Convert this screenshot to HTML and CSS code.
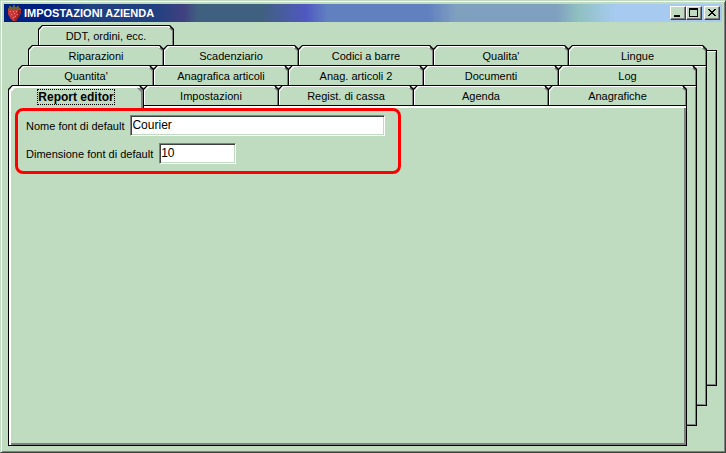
FILE: index.html
```html
<!DOCTYPE html>
<html lang="it">
  <head>
    <meta charset="utf-8" />
    <title>Impostazioni azienda</title>
    <meta name="viewport" content="width=device-width, initial-scale=1.0" />
    <link rel="stylesheet" href="styles.css">
  </head>
  <body>
    <div class="window">
      <header class="titlebar">
        <svg class="logo" width="16" height="16" viewBox="0 0 16 16">
          <path d="M2 4 L4 2 L12 2 L15 4 L15 7 L14 10 L12 13 L10 16 L7 16 L4 13 L2 9 Z" fill="#c83838" />
          <path d="M12 5 L15 5 L14 10 L12 13 L10 16 L8 15 L11 11 Z" fill="#982020" />
          <path d="M4 6h1v1h-1zM7 6h1v1h-1zM10 6h1v1h-1zM5 9h1v1h-1zM8 8h1v1h-1zM11 9h1v1h-1zM7 12h1v1h-1zM9 11h1v1h-1z" fill="#f09070" />
          <path d="M3 1h2v1h2v-2h2v2h2v-1h2v2h1v1h-3v1h-2v-1h-2v1h-2v-1h-3v-1h1z" fill="#686030" />
        </svg>
        <h1>IMPOSTAZIONI AZIENDA</h1>
        <div class="controls">
          <button aria-label="Riduci a icona">
            <svg width="12" height="10" viewBox="0 0 12 10"><path d="M2 7h6v2h-6z" /></svg>
          </button>
          <button aria-label="Ingrandisci">
            <svg width="12" height="10" viewBox="0 0 12 10"><path fill-rule="evenodd" d="M1 0h9v9h-9zM2 2v6h7v-6z" /></svg>
          </button>
          <button class="close" aria-label="Chiudi">
            <svg width="12" height="10" viewBox="0 0 12 10"><path d="M2 1h2v1h1v1h2v-1h1v-1h2v1h-1v1h-1v1h-1v1h1v1h1v1h1v1h-2v-1h-1v-1h-2v1h-1v1h-2v-1h1v-1h1v-1h1v-1h-1v-1h-1v-1h-1z" /></svg>
          </button>
        </div>
      </header>

      <main class="sheets">
        <section class="sheet sheet-4">
          <div class="tabs">
            <button class="tab">DDT, ordini, ecc.</button>
          </div>
          <div class="page"></div>
        </section>
        <section class="sheet sheet-3">
          <div class="tabs">
            <button class="tab">Riparazioni</button>
            <button class="tab">Scadenziario</button>
            <button class="tab">Codici a barre</button>
            <button class="tab">Qualita'</button>
            <button class="tab">Lingue</button>
          </div>
          <div class="page"></div>
        </section>
        <section class="sheet sheet-2">
          <div class="tabs">
            <button class="tab">Quantita'</button>
            <button class="tab">Anagrafica articoli</button>
            <button class="tab">Anag. articoli 2</button>
            <button class="tab">Documenti</button>
            <button class="tab">Log</button>
          </div>
          <div class="page"></div>
        </section>
        <section class="sheet sheet-1">
          <div class="tabs">
            <button class="tab active"><span>Report editor</span></button>
            <button class="tab">Impostazioni</button>
            <button class="tab">Regist. di cassa</button>
            <button class="tab">Agenda</button>
            <button class="tab">Anagrafiche</button>
          </div>
          <div class="page">
            <form class="fonts">
              <div class="field">
                <label for="font-name">Nome font di default</label>
                <input id="font-name" class="name" type="text" value="Courier" />
              </div>
              <div class="field">
                <label for="font-size">Dimensione font di default</label>
                <input id="font-size" class="size" type="text" value="10" />
              </div>
            </form>
          </div>
        </section>
      </main>
    </div>
  </body>
</html>
```

FILE: styles.css
```css
:root {
  --face: #c0dcc0;
  --shade: #808080;
  --dark: #404040;
}

* {
  box-sizing: border-box;
}

body {
  margin: 0;
  background: var(--face);
  color: black;
  font: 11px/14px "Liberation Sans", Arial, sans-serif;
}

button,
input {
  font: inherit;
  color: inherit;
}

.window {
  display: flex;
  flex-direction: column;
  min-height: 100vh;
  padding: 3px;
  border: 1px solid;
  border-color: var(--face) var(--dark) var(--dark) var(--face);
  box-shadow: inset 1px 1px white, inset -1px -1px var(--shade);
}

/* title bar */
.titlebar {
  display: flex;
  align-items: center;
  height: 18px;
  padding: 0 2px;
  background: linear-gradient(
    to right,
    #002080 0%,
    #002080 6%,
    #204080 12%,
    #204080 21%,
    #404080 25%,
    #406080 27%,
    #406080 36%,
    #5058c0 42%,
    #6080c0 45%,
    #6080c0 59%,
    #80a0c0 63%,
    #80a0c0 77%,
    #90c0c0 80%,
    #a6caf0 85%,
    #a6caf0 100%
  );
  color: white;
}

.titlebar h1 {
  margin: 0 auto 0 2px;
  font-size: 11px;
  font-weight: 700;
}

.controls {
  display: flex;
}

.controls button {
  display: flex;
  width: 16px;
  height: 14px;
  padding: 1px;
  border: 1px solid;
  border-color: white var(--dark) var(--dark) white;
  background: var(--face);
  box-shadow: inset -1px -1px var(--shade);
}

.controls .close {
  margin-left: 2px;
}

/* stacked sheets, each one 10px left and 20px below the one behind */
.sheets {
  flex: 1;
  display: grid;
  grid-template-columns: 10px 10px 10px 1fr 10px 10px 10px;
  grid-template-rows: 20px 20px 20px 1fr 20px 20px 20px;
  margin: 3px 5px 3px 4px;
}

.sheet {
  display: flex;
  flex-direction: column;
}

.sheet-4 {
  grid-area: 1 / 4 / 5 / 8;
}

.sheet-3 {
  grid-area: 2 / 3 / 6 / 7;
}

.sheet-2 {
  grid-area: 3 / 2 / 7 / 6;
}

.sheet-1 {
  grid-area: 4 / 1 / 8 / 5;
}

.page {
  flex: 1;
  border: 1px solid black;
  background: var(--face);
  box-shadow: inset 1px 1px white, inset -1px -1px var(--shade);
}

.sheet-1 .page {
  box-shadow: inset 2px 2px white, inset -2px -2px var(--shade);
}

/* tabs */
.tabs {
  display: flex;
  height: 20px;
}

.sheet-4 .tabs {
  height: 25px;
}

.tab {
  --edge: 1px;
  --cut: polygon(0 4px, 4px 0, calc(100% - 4px) 0, 100% 4px, 100% 100%, 0 100%);
  position: relative;
  z-index: 0;
  flex: 1 1 0;
  height: 20px;
  margin-right: -1px;
  padding: 2px 0 0;
  border: 0;
  background: black;
  clip-path: var(--cut);
}

.tab:last-child {
  flex-basis: 3px;
  margin-right: 0;
}

.sheet-4 .tab {
  flex: 0 0 calc((100% + 1px) / 5);
  height: 25px;
  padding-bottom: 5px;
}

.tab::before,
.tab::after {
  content: "";
  position: absolute;
  z-index: -1;
  inset: 1px 1px 0;
  clip-path: var(--cut);
}

/* top highlight runs almost the whole width, only the side is shaded */
.tab::before {
  background: linear-gradient(white, white) 0 0 / calc(100% - 3px) 2px no-repeat,
    linear-gradient(to right, white 50%, var(--shade) 50%);
}

.tab::after {
  inset: calc(1px + var(--edge)) calc(1px + var(--edge)) 0;
  background: var(--face);
}

.tab.active {
  --edge: 2px;
  z-index: 1;
  height: 23px;
  padding-bottom: 1px;
  font-size: 12px;
  font-weight: 700;
}

.tab.active span {
  display: inline-block;
  border: 1px dotted black;
}

/* font settings */
.fonts {
  display: flex;
  flex-direction: column;
  gap: 7px;
  width: fit-content;
  margin: 2px 6px;
  padding: 4px 13px 7px 8px;
  border: 3px solid red;
  border-radius: 8px;
}

.field {
  display: flex;
  align-items: center;
  gap: 6px;
}

.field input {
  height: 21px;
  padding: 0 1px 2px;
  border: 1px solid;
  border-color: var(--shade) white white var(--shade);
  border-radius: 0;
  background: white;
  box-shadow: inset 1px 1px var(--dark), inset -1px -1px var(--face);
  font-size: 12px;
  outline: none;
}

.field .name {
  width: 255px;
}

.field .size {
  width: 77px;
}
```
